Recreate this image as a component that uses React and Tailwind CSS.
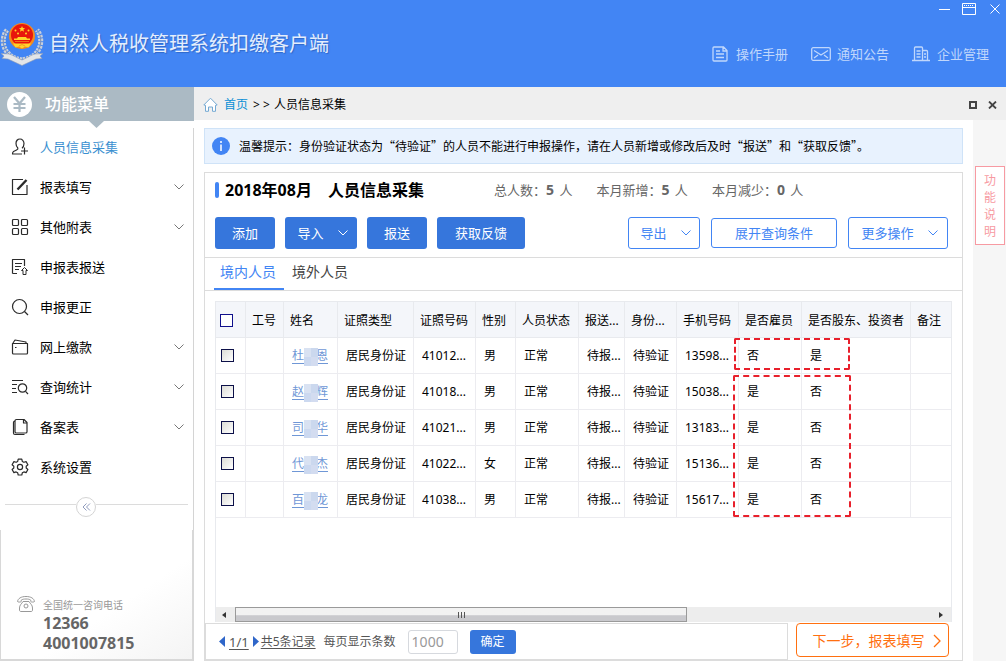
import { useState } from "react";
import clsx from "clsx";

const menu = [
  { icon: "user", label: "人员信息采集", active: true },
  { icon: "edit", label: "报表填写", sub: true },
  { icon: "grid", label: "其他附表", sub: true },
  { icon: "upload", label: "申报表报送" },
  { icon: "search", label: "申报更正" },
  { icon: "wallet", label: "网上缴款", sub: true },
  { icon: "query", label: "查询统计", sub: true },
  { icon: "copy", label: "备案表", sub: true },
  { icon: "gear", label: "系统设置" },
];

const columns = [
  "工号",
  "姓名",
  "证照类型",
  "证照号码",
  "性别",
  "人员状态",
  "报送...",
  "身份...",
  "手机号码",
  "是否雇员",
  "是否股东、投资者",
  "备注",
];

const people = [
  { first: "杜", last: "恩", id: "41012...", sex: "男", phone: "13598...", employee: "否", holder: "是" },
  { first: "赵", last: "辉", id: "41018...", sex: "男", phone: "15038...", employee: "是", holder: "否" },
  { first: "司", last: "华", id: "41021...", sex: "男", phone: "13183...", employee: "是", holder: "否" },
  { first: "代", last: "杰", id: "41022...", sex: "女", phone: "15136...", employee: "是", holder: "否" },
  { first: "百", last: "龙", id: "41038...", sex: "男", phone: "15617...", employee: "是", holder: "否" },
];

function MenuIcon({ name }) {
  const shapes = {
    user: (
      <>
        <path d="M11 10.2c1.300-1 2-2.600 2-4.700C13 2.900 11.300 1 9 1S5 2.900 5 5.500c0 2 .7 3.500 1.800 4.500.4.900-.2 1.500-1.200 2L2.500 13.500c-.8.500-1 1.200-1 2.500H11" />
        <path d="M13.500 9.500v7M10 13h7" />
      </>
    ),
    edit: (
      <>
        <path d="M12 1.500H1.500v15H16V7" />
        <path d="M15.500 2 6.500 11.500" strokeWidth="2.400" />
      </>
    ),
    grid: (
      <>
        <rect x="1.500" y="1.500" width="6" height="6" rx="1" />
        <rect x="10.500" y="1.500" width="6" height="6" rx="1" />
        <rect x="1.500" y="10.500" width="6" height="6" rx="1" />
        <rect x="10.500" y="10.500" width="6" height="6" rx="1" />
      </>
    ),
    upload: (
      <>
        <path d="M13.500 8V1.500h-12v14M4 5.500h7M4 8.500h6M4 11.500h4M1.500 15.500H6" />
        <path d="m13.500 9.500 3 3h-1.500v4h-3v-4h-1.500z" strokeWidth="1" />
      </>
    ),
    search: (
      <>
        <circle cx="8.500" cy="8.500" r="7" />
        <path d="m13.500 13.500 3.500 3.500" />
      </>
    ),
    wallet: (
      <>
        <path d="M1.500 5.500h15v9.500c0 .6-.4 1-1 1h-13c-.6 0-1-.4-1-1z" />
        <path d="M2 5 4 2l11 2v1.500" />
        <path d="M4 9.500h1.500" />
      </>
    ),
    query: (
      <>
        <path d="M1 2.500h11M1 6.500h5M1 10.500h4M1 14.500h5" />
        <circle cx="11.500" cy="10" r="4.200" />
        <path d="m14.500 13.300 2.500 2.700" />
      </>
    ),
    copy: (
      <>
        <path d="M5.500 1.500h7.500l3 3v9.200c0 .8-.5 1.300-1.300 1.300H5.500c-.8 0-1.500-.5-1.500-1.300V3c0-.9.600-1.500 1.500-1.500z" />
        <path d="M12.500 1.500V5H16M4 3.200c-1 0-1.500.500-1.500 1.300v10.500c0 1 .6 1.500 1.500 1.500h9.500" />
      </>
    ),
    gear: (
      <>
        <path d="M7.200 1.200h3.600l.5 2.200 1.600.9 2.200-.7 1.800 3.100-1.700 1.500v1.800l1.700 1.500-1.800 3.100-2.200-.7-1.600.9-.5 2.200H7.200l-.5-2.200-1.600-.9-2.200.7-1.800-3.100L2.800 10V8.200L1.100 6.700l1.800-3.100 2.200.7 1.600-.9z" />
        <circle cx="9" cy="9" r="2.600" />
      </>
    ),
  };
  return (
    <svg width="18" height="18" viewBox="0 0 18 18" fill="none" stroke="#2b2b2b" strokeWidth="1.200" strokeLinejoin="round">
      {shapes[name]}
    </svg>
  );
}

function Chevron({ className }) {
  return (
    <svg className={className} width="10" height="6" viewBox="0 0 10 6" fill="none" stroke="currentColor">
      <path d="m.5.5 4.500 4.500L9.500.5" />
    </svg>
  );
}

function Emblem() {
  return (
    <svg width="44" height="46" viewBox="0 0 44 46" fill="none">
      {/* wheat wreath */}
      <path d="M7 9C2 15 2 25 7 31c4 5 9 7 15 8 6-1 11-3 15-8 5-6 5-16 0-22" stroke="#c9d0dc" strokeWidth="5" strokeDasharray="2.500 1" />
      <path d="M7 9C2 15 2 25 7 31c4 5 9 7 15 8 6-1 11-3 15-8 5-6 5-16 0-22" stroke="#7f92b5" strokeWidth="1" />
      {/* ribbon */}
      <path d="M1 32.500 9 33c4 1 8 4 13 6 5-2 9-5 13-6l8-.5-3 2.500 2 2.500-6 .5-14 6.500-14-6.500-6-.5 2-2.500z" fill="#e3e5e8" stroke="#8d9bb3" strokeWidth=".6" />
      {/* disc */}
      <circle cx="22" cy="15" r="13" fill="#f58a1c" />
      <circle cx="22" cy="14" r="11" fill="#e8150c" />
      <path d="m22 5 .9 2 2.200.2-1.700 1.400.6 2.200-2-1.200-2 1.200.6-2.200-1.700-1.400 2.200-.2z" fill="#ffd42a" />
      <g fill="#ffd42a">
        <circle cx="15.500" cy="9.500" r="1" />
        <circle cx="28.500" cy="9.500" r="1" />
        <circle cx="18" cy="12.500" r="1" />
        <circle cx="26" cy="12.500" r="1" />
        <path d="M18 16h8l1 1.500h3V19H14v-1.500h3z" />
        <path d="M13 22.500h18l-2.500 4-3.500-1-3 2-3-2-3.500 1z" />
      </g>
      <path d="M15 20.500h14M19 25l3-1.500 3 1.500" stroke="#f08a1c" strokeWidth=".8" />
    </svg>
  );
}

function Header() {
  return (
    <header className="flex h-[87px] shrink-0 justify-between bg-[#4285f4]">
      <div className="flex items-center gap-[5px]">
        <Emblem />
        <h1 className="text-xl leading-7 text-[#e4eefd] [text-shadow:1px_1px_1px_#2f67c8]">自然人税收管理系统扣缴客户端</h1>
      </div>

      <div className="flex flex-col">
        {/* window controls */}
        <div className="flex h-[18px] items-center justify-end gap-3 pr-[6px] text-white">
          <button aria-label="最小化">
            <svg width="12" height="14" viewBox="0 0 12 14" stroke="currentColor"><path d="M1 7.500h11" /></svg>
          </button>
          <button aria-label="最大化">
            <svg width="14" height="12" viewBox="0 0 14 12" fill="none" stroke="currentColor">
              <path d="M.5.5h13v11H.5zM.5 4.500h13" />
              <path d="M2 2.500h10" strokeDasharray="1 1" />
            </svg>
          </button>
          <button aria-label="关闭" className="pl-[2px]">
            <svg width="10" height="10" viewBox="0 0 10 10" stroke="currentColor"><path d="m.5.5 9 9M9.500.5l-9 9" /></svg>
          </button>
        </div>

        <nav className="flex flex-1 items-center gap-[23px] pt-[2px] pr-[17px] text-[13px] leading-5 text-[#c0d7fc]">
          <a href="#manual" className="flex items-center gap-2">
            <svg width="16" height="16" viewBox="0 0 16 16" fill="none" stroke="currentColor" strokeWidth="1.300">
              <path d="M2 1h9.500L15 4.500V14c0 .6-.4 1-1 1H2c-.6 0-1-.4-1-1V2c0-.6.400-1 1-1zM11 1v4h4M4 5h4M4 8h8M4 11.500h8" />
            </svg>
            操作手册
          </a>
          <a href="#notice" className="flex items-center gap-[6px]">
            <svg width="20" height="14" viewBox="0 0 20 14" fill="none" stroke="currentColor" strokeWidth="1.300">
              <rect x=".7" y=".7" width="18.600" height="12.600" rx="1.500" />
              <path d="m3 3.500 7 4.500 7-4.500M3 11l4-3M17 11l-4-3" />
            </svg>
            通知公告
          </a>
          <a href="#company" className="flex items-center gap-[7px]">
            <svg width="18" height="16" viewBox="0 0 18 16" fill="none" stroke="currentColor" strokeWidth="1.300">
              <path d="M0 14.500h18M2.500 14V2c0-.6.400-1 1-1h6c.6 0 1 .4 1 1v12M10.500 4.500h4c.6 0 1 .4 1 1V14M4.500 5h4M4.500 8h4M4.500 11h4M12 8h2M12 11h2" />
            </svg>
            企业管理
          </a>
        </nav>
      </div>
    </header>
  );
}

function Sidebar() {
  return (
    <aside className="flex w-[194px] shrink-0 flex-col bg-white">
      <div className="relative flex h-[34px] shrink-0 items-center gap-[13px] bg-[#abbac4] pl-[7px] text-white">
        <svg width="25" height="25" viewBox="0 0 25 25" fill="none">
          <circle cx="12.500" cy="12.500" r="12.500" fill="#fff" />
          <path d="m7 5 5.500 6.500L18 5M12.500 11.500V20M6.500 12h12M6.500 16h12" stroke="#abbac4" strokeWidth="2.200" />
        </svg>
        <h2 className="text-base leading-6 font-medium">功能菜单</h2>
        <svg className="absolute top-full left-[89px]" width="15" height="7" viewBox="0 0 15 7" fill="#abbac4">
          <path d="M0 0h15L7.500 7z" />
        </svg>
      </div>

      <div className="mt-[7px] flex flex-1 flex-col border-r border-[#d4d4d4]">
        <nav className="-mt-px flex flex-col">
          {menu.map((item) => (
            <a
              key={item.label}
              href="#menu"
              className={clsx(
                "flex h-10 items-center gap-[11px] pr-[9px] pl-[11px] text-[13px] leading-5",
                item.active ? "text-[#3a8fd0]" : "text-black"
              )}
            >
              <MenuIcon name={item.icon} />
              <span className="flex-1">{item.label}</span>
              {item.sub && <Chevron className="text-[#777]" />}
            </a>
          ))}
        </nav>

        {/* collapse handle */}
        <div className="mt-[10px] flex items-center px-[5px]">
          <span className="mb-[5px] h-px w-[71px] bg-[#dcdcdc]" />
          <button aria-label="收起" className="flex size-5 items-center justify-center rounded-full border border-[#d4d4d4] text-[#8f9bbd]">
            <svg width="9" height="8" viewBox="0 0 9 8" fill="none" stroke="currentColor"><path d="M4.500.5 1 4l3.500 3.500M8 .5 4.500 4 8 7.500" /></svg>
          </button>
          <span className="mb-[5px] h-px flex-1 bg-[#dcdcdc]" />
        </div>
      </div>

      {/* hotline */}
      <div className="flex h-[131px] shrink-0 items-end gap-2 border-r-2 border-b-2 border-l border-[#d8d8d8] bg-linear-to-br from-white from-60% to-[#f4f4f4] pb-[6px] pl-4">
        <svg className="mb-[41px]" width="18" height="16" viewBox="0 0 18 16" fill="none" stroke="#999">
          <path d="M.5 5.500C1 2.500 4 .5 9 .5s8 2 8.500 5c0 .7-3.500.8-3.700 0V4.200C12.500 3.200 11 3 9 3s-3.500.200-4.800 1.200v1.300c-.2.800-3.700.700-3.700 0z" />
          <path d="M6 5.500C4.500 8 2.500 9 2.500 12v2c0 1 .5 1.500 1.500 1.500h10c1 0 1.500-.5 1.500-1.500v-2c0-3-2-4-3.500-6.500z" />
          <circle cx="9" cy="10" r="2" />
        </svg>
        <div className="text-[#666]">
          <p className="text-[10px] leading-4 text-[#999]">全国统一咨询电话</p>
          <p className="text-base leading-5 font-bold">12366</p>
          <p className="text-base leading-5 font-bold">4001007815</p>
        </div>
      </div>
    </aside>
  );
}

function Breadcrumb() {
  return (
    <div className="flex h-[33px] shrink-0 items-center bg-[#efefef] pt-[2px] pr-[9px] pl-[9px] text-xs leading-4">
      <svg width="15" height="15" viewBox="0 0 15 15" fill="#fff" stroke="#74a9d3">
        <path d="M.8 8 7.500 1.200 14.200 8l-1.700.3v6H9.500V10h-4v4.300h-3v-6z" strokeLinejoin="round" />
      </svg>
      <a href="#home" className="ml-[6px] text-[#0a8fd6]">首页</a>
      <span className="ml-[5px]">&gt;&nbsp;&gt;</span>
      <span className="ml-1">人员信息采集</span>
      <button aria-label="还原" className="ml-auto">
        <svg width="8" height="8" viewBox="0 0 8 8" fill="none" stroke="#444" strokeWidth="2"><path d="M1 1h6v6H1z" /></svg>
      </button>
      <button aria-label="关闭页面" className="ml-[11px]">
        <svg width="9" height="8" viewBox="0 0 9 8" stroke="#444" strokeWidth="1.800"><path d="m1 .5 7 7M8 .5l-7 7" /></svg>
      </button>
    </div>
  );
}

function Stat({ label, value }) {
  return (
    <span>
      {label}：<b className="mr-[2px] text-sm leading-5">{value}</b> 人
    </span>
  );
}

const solid = "flex h-8 items-center justify-center rounded-[3px] bg-[#3676dc] text-[13px] leading-5 text-white";
const outline = "flex items-center justify-center rounded-[3px] border border-[#4285f4] bg-white text-[13px] leading-5 text-[#4285f4]";

function Toolbar() {
  return (
    <div className="border-b border-[#dcdcdc] px-[10px] pb-2">
      <div className="flex h-[34px] items-center">
        <span className="h-4 w-1 rounded-sm bg-[#4285f4]" />
        <h3 className="ml-[6px] w-[269px] text-base leading-6 font-bold text-black">
          <span className="mr-4">2018年08月</span>
          人员信息采集
        </h3>
        <div className="flex gap-6 text-[13px] leading-5 text-[#666]">
          <Stat label="总人数" value="5" />
          <Stat label="本月新增" value="5" />
          <Stat label="本月减少" value="0" />
        </div>
      </div>

      <div className="mt-[10px] flex items-center gap-[10px]">
        <button className={clsx(solid, "w-[60px]")}>添加</button>
        <button className={clsx(solid, "w-[72px] gap-[14px] pl-[3px]")} aria-haspopup="menu">
          导入 <Chevron />
        </button>
        <button className={clsx(solid, "w-[60px]")}>报送</button>
        <button className={clsx(solid, "w-[88px]")}>获取反馈</button>
        <div className="ml-auto flex items-center gap-[11px] pr-1">
          <button className={clsx(outline, "h-8 w-[72px] gap-[14px] pl-[3px]")} aria-haspopup="menu">
            导出 <Chevron />
          </button>
          <button className={clsx(outline, "h-[30px] w-[126px]")}>展开查询条件</button>
          <button className={clsx(outline, "h-8 w-[100px] gap-[14px] pl-[3px]")} aria-haspopup="menu">
            更多操作 <Chevron />
          </button>
        </div>
      </div>
    </div>
  );
}

function Tabs() {
  const [tab, setTab] = useState("境内人员");
  return (
    <div role="tablist" className="flex h-[33px] shrink-0 gap-[2px] border-b border-[#dcdcdc] pl-[9px] text-sm leading-5">
      {["境内人员", "境外人员"].map((name) => (
        <button
          key={name}
          role="tab"
          aria-selected={tab === name}
          onClick={() => setTab(name)}
          className={clsx(
            "border-b-2 pr-2 pb-[2px] pl-[6px]",
            tab === name ? "border-[#4285f4] text-[#4285f4]" : "border-transparent text-[#444]"
          )}
        >
          {name}
        </button>
      ))}
    </div>
  );
}

function PeopleTable() {
  const th = "h-9 border-b border-[#e8eaee] bg-[#f4f6fa] text-left font-normal";
  const td = "h-9 border-r border-b border-[#ececf0] pl-2";
  return (
    <table className="w-full table-fixed border-separate border-spacing-0 text-xs leading-4 whitespace-nowrap text-black">
      <colgroup>
        <col className="w-[30px]" />
        <col className="w-[38px]" />
        <col className="w-[54px]" />
        <col className="w-[76px]" />
        <col className="w-[62px]" />
        <col className="w-[40px]" />
        <col className="w-[63px]" />
        <col className="w-[46px]" />
        <col className="w-[52px]" />
        <col className="w-[62px]" />
        <col className="w-[63px]" />
        <col className="w-[109px]" />
        <col />
      </colgroup>
      <thead>
        <tr>
          <th className={clsx(th, "border-r pt-[2px] pl-1")}>
            <input type="checkbox" aria-label="全选" className="block size-[13px] appearance-none border border-[#10108c] bg-white checked:bg-[#4285f4]" />
          </th>
          {columns.map((c) => (
            <th key={c} className={clsx(th, "border-r pt-[2px] pl-[6px] last:border-r-0")}>{c}</th>
          ))}
        </tr>
      </thead>
      <tbody>
        {people.map((p, i) => (
          <tr key={p.id}>
            <td className="h-9 border-r border-b border-[#ececf0] pl-[5px]">
              <input
                type="checkbox"
                aria-label={p.first + p.last}
                className="block size-[13px] appearance-none border border-[#0c1048] bg-linear-to-br from-[#dcdcd6] to-white checked:from-[#4285f4]"
              />
            </td>
            <td className={td} />
            <td className={td}>
              <a href="#person" className="relative flex h-4 w-9 justify-between border-b border-[#6f97d6] text-[#6f97d6]">
                <span>{p.first}</span>
                <span>{p.last}</span>
                {/* masked middle character */}
                <span className="absolute top-0 left-3 grid h-[18px] w-[14px] grid-cols-2">
                  <i className="bg-[#d9e2f2]" />
                  <i className="bg-[#cbd8ee]" />
                  <i className="bg-[#ccd9f0]" />
                  <i className="bg-[#d3dcf0]" />
                </span>
              </a>
            </td>
            <td className={td}>居民身份证</td>
            <td className={td}>{p.id}</td>
            <td className={td}>{p.sex}</td>
            <td className={td}>正常</td>
            <td className={td}>待报...</td>
            <td className={td}>待验证</td>
            <td className={td}>{p.phone}</td>
            <td className={clsx(td, "relative")}>
              {p.employee}
              {i === 0 && (
                <span className="pointer-events-none absolute top-0 -left-[5px] z-10 h-8 w-[116px] rounded-xs border-2 border-dashed border-[#e8202c]" />
              )}
              {i === 1 && (
                <span className="pointer-events-none absolute top-px -left-[6px] z-10 h-[142px] w-[118px] rounded-xs border-2 border-dashed border-[#e8202c]" />
              )}
            </td>
            <td className={td}>{p.holder}</td>
            <td className="h-9 border-b border-[#ececf0]" />
          </tr>
        ))}
      </tbody>
    </table>
  );
}

function ScrollBar() {
  return (
    <div className="mt-auto flex h-[15px] bg-[#ededed]">
      <button aria-label="向左" className="flex w-[19px] items-center justify-center pr-[3px]">
        <svg width="4" height="6" viewBox="0 0 4 6" fill="#333"><path d="M4 0v6L0 3z" /></svg>
      </button>
      <div className="flex flex-1">
        <div className="flex w-[65%] items-center justify-center gap-[2px] border border-[#9a9a9a] bg-linear-to-b from-[#f2f2f2] from-50% to-[#c9c9cd] to-60%">
          <i className="h-[6px] w-px bg-[#555]" />
          <i className="h-[6px] w-px bg-[#555]" />
          <i className="h-[6px] w-px bg-[#555]" />
        </div>
      </div>
      <button aria-label="向右" className="flex w-5 items-center justify-center">
        <svg width="4" height="6" viewBox="0 0 4 6" fill="#333"><path d="M0 0v6l4-3z" /></svg>
      </button>
    </div>
  );
}

function Pager() {
  return (
    <div className="mt-px flex h-[37px] shrink-0 gap-2 pr-[13px]">
      <div className="flex flex-1 items-center border border-[#dcdcdc] pl-[13px] text-xs leading-4 text-[#555]">
        <button aria-label="上一页">
          <svg width="6" height="11" viewBox="0 0 6 11" fill="#2f66c9"><path d="M6 0v11L0 5.500z" /></svg>
        </button>
        <a href="#page" className="ml-1 text-[13px] underline underline-offset-2">1/1</a>
        <button aria-label="下一页" className="ml-1">
          <svg width="6" height="11" viewBox="0 0 6 11" fill="#2f66c9"><path d="M0 0v11l6-5.500z" /></svg>
        </button>
        <a href="#all" className="ml-[2px] underline underline-offset-2">共5条记录</a>
        <label htmlFor="size" className="ml-2">每页显示条数</label>
        <input id="size" defaultValue="1000" className="ml-3 h-6 w-[50px] rounded-[3px] border border-[#d6d9de] px-[3px] text-sm leading-5 text-[#999]" />
        <button className="ml-3 h-6 w-[46px] rounded-[3px] bg-[#3676dc] text-white">确定</button>
      </div>
      <button className="flex h-[34px] w-[153px] items-center justify-center gap-2 rounded-[4px] border border-[#ff7010] pt-[2px] pl-2 text-sm leading-5 text-[#ff7010]">
        下一步，报表填写
        <svg width="8" height="14" viewBox="0 0 8 14" fill="none" stroke="currentColor" strokeWidth="1.300"><path d="m1 1 6 6-6 6" /></svg>
      </button>
    </div>
  );
}

export default function App() {
  return (
    <div className="flex min-h-screen flex-col bg-white font-['Noto_Sans','Noto_Sans_CJK_SC',sans-serif]">
      <Header />
      <div className="flex flex-1">
        <Sidebar />
        <div className="flex min-w-0 flex-1 flex-col">
          <Breadcrumb />
          <div className="flex flex-1">
            <main className="flex min-w-0 flex-1 flex-col px-[10px] pt-2">
              {/* tip */}
              <div className="flex h-9 shrink-0 items-center gap-[9px] border border-[#cfe3f8] bg-[#e8f2fe] pl-[7px]">
                <svg width="18" height="18" viewBox="0 0 18 18" fill="none" stroke="#fff" strokeWidth="1.500">
                  <circle cx="9" cy="9" r="9" fill="#4285f4" stroke="none" />
                  <path d="M9 4v2M9 7.500V14" />
                </svg>
                <p className="font-['Noto_Sans_CJK_SC',sans-serif] text-xs leading-4 text-black" lang="zh-CN">
                  温馨提示：身份验证状态为“待验证”的人员不能进行申报操作，请在人员新增或修改后及时“报送”和“获取反馈”。
                </p>
              </div>

              <section className="mt-2 flex flex-1 flex-col border border-[#dcdcdc]">
                <Toolbar />
                <Tabs />
                <div className="mx-[10px] mt-[10px] flex flex-1 flex-col border-x border-t border-[#e8eaee]">
                  <PeopleTable />
                  <ScrollBar />
                </div>
                <Pager />
              </section>
            </main>

            <div className="w-[33px] shrink-0 bg-[#f6f6f6] pt-[46px] pl-[2px]">
              <button className="h-[79px] w-[30px] border border-[#f79aa2] bg-white px-2 text-xs leading-[17px] text-[#f79aa2]">
                功能说明
              </button>
            </div>
          </div>
        </div>
      </div>
    </div>
  );
}
